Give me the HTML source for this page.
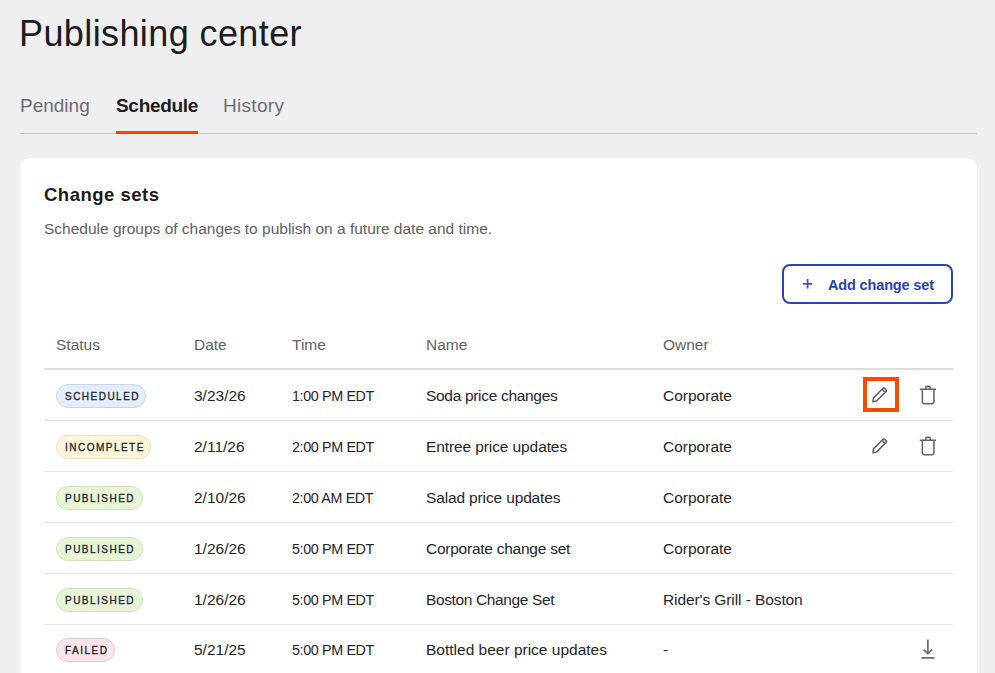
<!DOCTYPE html>
<html><head><meta charset="utf-8">
<style>
*{margin:0;padding:0;box-sizing:border-box}
html,body{width:995px;height:673px;overflow:hidden;background:#efeff1;font-family:"Liberation Sans",sans-serif;color:#1f1f1f}
.abs{position:absolute;white-space:nowrap}
#title{left:19px;top:12.3px;letter-spacing:0.4px;font-size:36px;line-height:44px;color:#1c1c1c}
.tab{top:95px;font-size:19px;line-height:22px;color:#6d6d72}
.tab.on{color:#1c1c1c;font-weight:bold;letter-spacing:-0.3px}
#tabline{left:20px;top:133px;width:957px;height:1px;background:#c6c6c8}
#tabul{left:116px;top:131px;width:82px;height:3px;background:#f54600}
#card{left:20px;top:158px;width:957px;height:560px;background:#fff;border-radius:10px}
#h2{left:44px;top:184px;font-size:18.5px;line-height:22px;font-weight:bold;color:#1c1c1c;letter-spacing:0.5px}
#sub{left:44px;top:220px;font-size:15.5px;line-height:18px;color:#5e5e64}
#btn{left:782px;top:264px;width:171px;height:40px;border:2px solid #2a44b8;border-radius:8px;color:#2a40b4;background:#fff}
#btn svg{left:18.4px;top:11.8px}
#btn .t{position:absolute;left:44px;top:10px;letter-spacing:-0.15px;font-size:14.5px;line-height:18px;font-weight:bold}
.th{top:335.5px;font-size:15.5px;line-height:18px;color:#616166}
#hline{left:44px;top:368px;width:909px;height:2px;background:#dedede}
.rline{left:44px;width:909px;height:1px;background:#e4e4e4}
.cell{font-size:15.5px;line-height:18px;color:#25252a}
.tm{letter-spacing:-0.4px;transform:scaleX(0.925);transform-origin:0 0}
.nm{letter-spacing:-0.25px}
.badge{position:absolute;left:56px;height:24px;border-radius:12px;border:1px solid;font-size:11.5px;line-height:22px;color:#1f2633}
.badge span{position:absolute;left:8px;top:0;letter-spacing:1.7px;-webkit-text-stroke:0.35px #1f2633;transform:scaleX(0.87);transform-origin:0 0}
.b-s{background:#e3edf9;border-color:#c8d5e4}
.b-i{background:#fcf5d8;border-color:#ebe1bd}
.b-p{background:#e7f5d6;border-color:#cfe2be}
.b-f{background:#fbe5e8;border-color:#e8c8cd}
.focus{left:863px;width:36px;height:35px;border:4px solid #fc4a00}
svg{position:absolute}
</style></head><body>
<div id="title" class="abs">Publishing center</div>
<div class="abs tab" style="left:20px">Pending</div>
<div class="abs tab on" style="left:116px">Schedule</div>
<div class="abs tab" style="left:223px;letter-spacing:0.3px">History</div>
<div id="tabline" class="abs"></div>
<div id="tabul" class="abs"></div>
<div id="card" class="abs"></div>
<div id="h2" class="abs">Change sets</div>
<div id="sub" class="abs">Schedule groups of changes to publish on a future date and time.</div>
<div id="btn" class="abs"><svg width="12" height="12" viewBox="0 0 12 12" style="position:absolute"><path d="M5.6 1.1 V10.5 M0.9 5.8 H10.3" stroke="#4152c0" stroke-width="1.8" fill="none"/></svg><span class="t">Add change set</span></div>
<div class="abs th" style="left:56px">Status</div>
<div class="abs th" style="left:194px">Date</div>
<div class="abs th" style="left:292px">Time</div>
<div class="abs th" style="left:426px">Name</div>
<div class="abs th" style="left:663px">Owner</div>
<div id="hline" class="abs"></div>
<div class="badge b-s" style="top:384px;width:90px"><span>SCHEDULED</span></div>
<div class="abs cell" style="left:194px;top:387px">3/23/26</div>
<div class="abs cell tm" style="left:292px;top:387px">1:00 PM EDT</div>
<div class="abs cell" style="left:426px;top:387px;letter-spacing:-0.31px">Soda price changes</div>
<div class="abs cell" style="left:663px;top:387px;letter-spacing:0px">Corporate</div>
<div class="abs rline" style="top:420px"></div>
<div class="abs focus" style="top:377px"></div>
<svg style="left:866px;top:381px" width="28" height="28" viewBox="0 0 28 28"><path d="M7.4 16.9 L17.3 7.0 Q17.8 6.5 18.3 7.0 L20.4 9.1 Q20.9 9.6 20.4 10.1 L10.8 19.7 L7.0 20.9 Z M16.05 8.25 L19.15 11.35" fill="none" stroke="#606060" stroke-width="1.5" stroke-linejoin="round"/></svg>
<svg style="left:914px;top:381px" width="28" height="28" viewBox="0 0 28 28"><path d="M5.8 8.3 H22 M11.6 8.3 V6.6 Q11.6 5.15 13.05 5.15 H14.9 Q16.35 5.15 16.35 6.6 V8.3 M8.35 8.3 V20.6 Q8.35 22.65 10.4 22.65 H17.9 Q19.95 22.65 19.95 20.6 V8.3" fill="none" stroke="#626262" stroke-width="1.5"/></svg>
<div class="badge b-i" style="top:435px;width:95px"><span>INCOMPLETE</span></div>
<div class="abs cell" style="left:194px;top:438px">2/11/26</div>
<div class="abs cell tm" style="left:292px;top:438px">2:00 PM EDT</div>
<div class="abs cell" style="left:426px;top:438px;letter-spacing:-0.1px">Entree price updates</div>
<div class="abs cell" style="left:663px;top:438px;letter-spacing:0px">Corporate</div>
<div class="abs rline" style="top:471px"></div>
<svg style="left:866px;top:432px" width="28" height="28" viewBox="0 0 28 28"><path d="M7.4 16.9 L17.3 7.0 Q17.8 6.5 18.3 7.0 L20.4 9.1 Q20.9 9.6 20.4 10.1 L10.8 19.7 L7.0 20.9 Z M16.05 8.25 L19.15 11.35" fill="none" stroke="#606060" stroke-width="1.5" stroke-linejoin="round"/></svg>
<svg style="left:914px;top:432px" width="28" height="28" viewBox="0 0 28 28"><path d="M5.8 8.3 H22 M11.6 8.3 V6.6 Q11.6 5.15 13.05 5.15 H14.9 Q16.35 5.15 16.35 6.6 V8.3 M8.35 8.3 V20.6 Q8.35 22.65 10.4 22.65 H17.9 Q19.95 22.65 19.95 20.6 V8.3" fill="none" stroke="#626262" stroke-width="1.5"/></svg>
<div class="badge b-p" style="top:486px;width:87px"><span>PUBLISHED</span></div>
<div class="abs cell" style="left:194px;top:489px">2/10/26</div>
<div class="abs cell tm" style="left:292px;top:489px">2:00 AM EDT</div>
<div class="abs cell" style="left:426px;top:489px;letter-spacing:-0.14px">Salad price updates</div>
<div class="abs cell" style="left:663px;top:489px;letter-spacing:0px">Corporate</div>
<div class="abs rline" style="top:522px"></div>
<div class="badge b-p" style="top:537px;width:87px"><span>PUBLISHED</span></div>
<div class="abs cell" style="left:194px;top:540px">1/26/26</div>
<div class="abs cell tm" style="left:292px;top:540px">5:00 PM EDT</div>
<div class="abs cell" style="left:426px;top:540px;letter-spacing:-0.25px">Corporate change set</div>
<div class="abs cell" style="left:663px;top:540px;letter-spacing:0px">Corporate</div>
<div class="abs rline" style="top:573px"></div>
<div class="badge b-p" style="top:588px;width:87px"><span>PUBLISHED</span></div>
<div class="abs cell" style="left:194px;top:591px">1/26/26</div>
<div class="abs cell tm" style="left:292px;top:591px">5:00 PM EDT</div>
<div class="abs cell" style="left:426px;top:591px;letter-spacing:-0.37px">Boston Change Set</div>
<div class="abs cell" style="left:663px;top:591px;letter-spacing:-0.09px">Rider's Grill - Boston</div>
<div class="abs rline" style="top:624px"></div>
<div class="badge b-f" style="top:638px;width:59px"><span>FAILED</span></div>
<div class="abs cell" style="left:194px;top:641px">5/21/25</div>
<div class="abs cell tm" style="left:292px;top:641px">5:00 PM EDT</div>
<div class="abs cell" style="left:426px;top:641px;letter-spacing:0px">Bottled beer price updates</div>
<div class="abs cell" style="left:663px;top:641px;letter-spacing:0px">-</div>
<svg style="left:914px;top:632px" width="28" height="32" viewBox="0 0 28 32"><path d="M13.9 7.6 V21 M9.7 17.6 L13.9 21.6 L18.1 17.6 M7.4 25.9 H20.5" fill="none" stroke="#6a6a6a" stroke-width="1.7"/></svg>
</body></html>
